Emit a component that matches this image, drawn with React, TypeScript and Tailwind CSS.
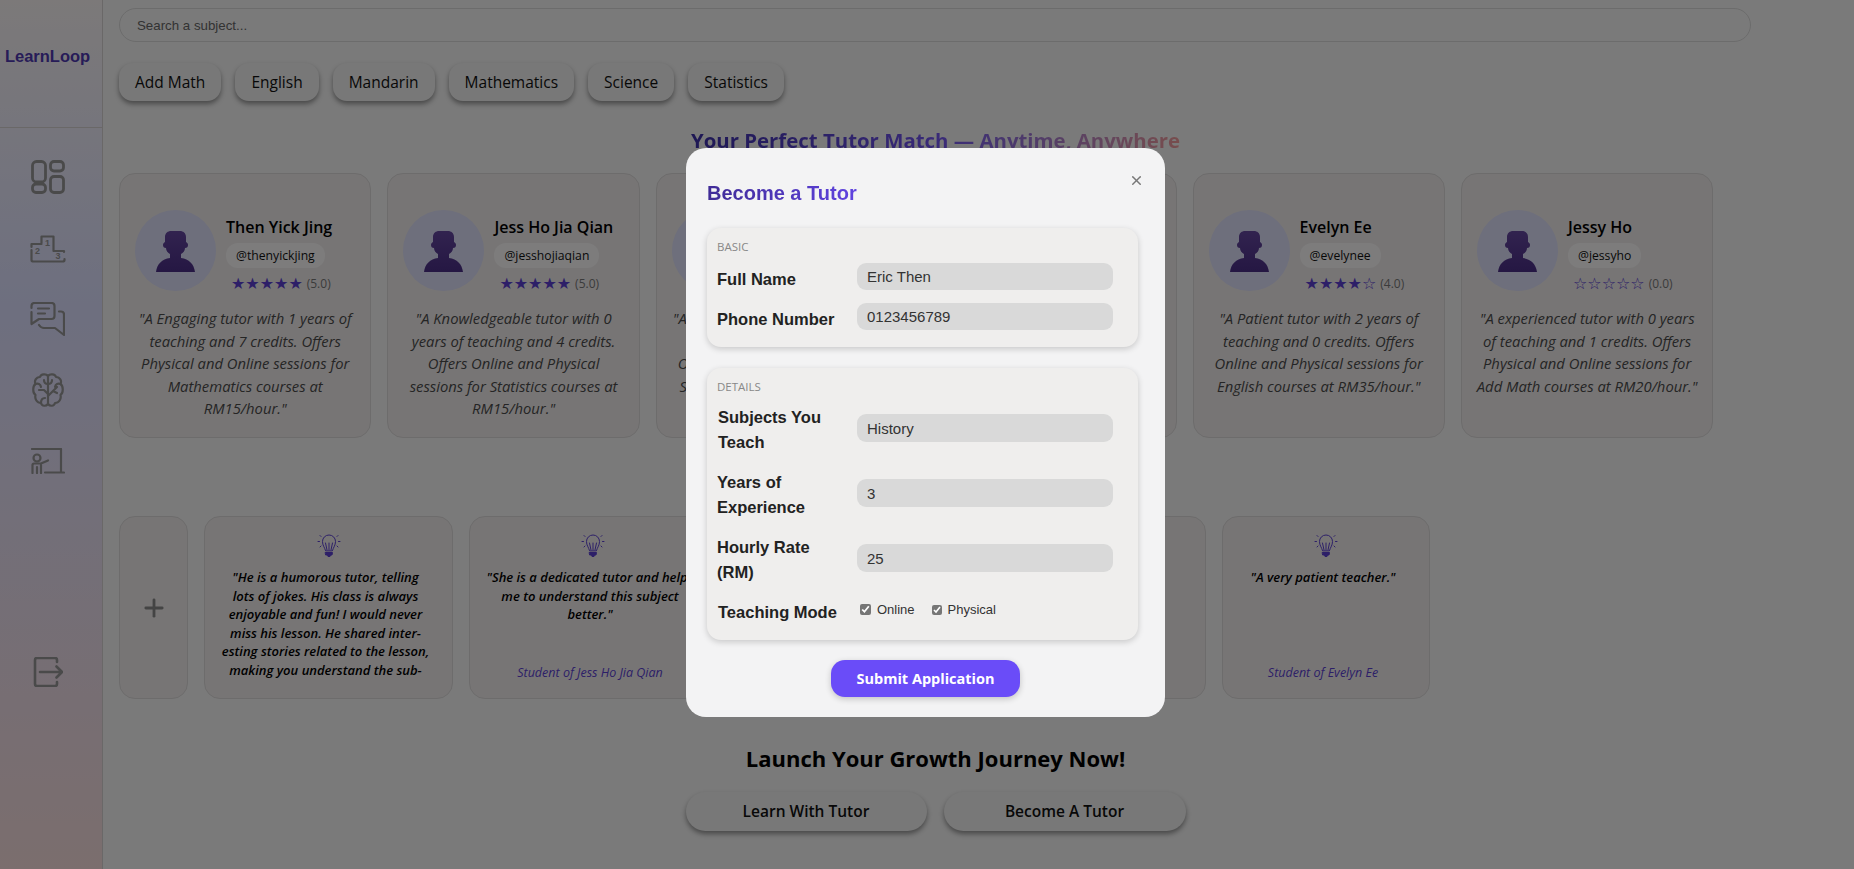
import { Plus, X } from "lucide-react";

const tutors = [
  { name: "Then Yick Jing", handle: "@thenyickjing", stars: "★★★★★", score: "(5.0)", text: '"A Engaging tutor with 1 years of teaching and 7 credits. Offers Physical and Online sessions for Mathematics courses at RM15/hour."' },
  { name: "Jess Ho Jia Qian", handle: "@jesshojiaqian", stars: "★★★★★", score: "(5.0)", text: '"A Knowledgeable tutor with 0 years of teaching and 4 credits. Offers Online and Physical sessions for Statistics courses at RM15/hour."' },
  { name: "Aisyah Rahman", handle: "@aisyahrahman", stars: "★★★★☆", score: "(4.0)", text: '"A Dedicated tutor with 3 years of teaching and 2 credits. Offers Online and Physical sessions for Science courses at RM25/hour."' },
  { name: "Wong Mei Ling", handle: "@wongmeiling", stars: "★★★★☆", score: "(4.0)", text: '"A Friendly tutor with 1 years of teaching and 3 credits. Offers Online and Physical sessions for Mandarin courses at RM20/hour."' },
  { name: "Evelyn Ee", handle: "@evelynee", stars: "★★★★☆", score: "(4.0)", text: '"A Patient tutor with 2 years of teaching and 0 credits. Offers Online and Physical sessions for English courses at RM35/hour."' },
  { name: "Jessy Ho", handle: "@jessyho", stars: "☆☆☆☆☆", score: "(0.0)", text: '"A experienced tutor with 0 years of teaching and 1 credits. Offers Physical and Online sessions for Add Math courses at RM20/hour."' },
];

const subjects = ["Add Math", "English", "Mandarin", "Mathematics", "Science", "Statistics"];

function DashboardIcon() {
  return (
    <svg width="34" height="34" viewBox="0 0 34 34" fill="none" stroke="#949494" strokeWidth="2.800">
      <rect x="1.500" y="1.500" width="13" height="20.500" rx="4" />
      <rect x="19.500" y="1.500" width="13" height="9.500" rx="3.500" />
      <rect x="1.500" y="24" width="13" height="8.500" rx="3.500" />
      <rect x="19.500" y="16.500" width="13" height="16" rx="3.500" />
    </svg>
  );
}

function PodiumIcon() {
  return (
    <svg width="36" height="28" viewBox="0 0 36 28" fill="none" stroke="#949494" strokeWidth="2.200" strokeLinecap="round" strokeLinejoin="round">
      <path d="M11.500 8V1.500h12V16h10.500v1M1.500 12V9h10M1.500 15v10q0 1.500 2 1.500h29q2 0 2-1.500v-1" />
      <text x="15" y="11" fontSize="9" fontWeight="700" fontFamily="Liberation Sans, sans-serif" fill="#949494" stroke="none">1</text>
      <text x="5" y="19" fontSize="9" fontWeight="700" fontFamily="Liberation Sans, sans-serif" fill="#949494" stroke="none">2</text>
      <text x="25.500" y="24" fontSize="9" fontWeight="700" fontFamily="Liberation Sans, sans-serif" fill="#949494" stroke="none">3</text>
    </svg>
  );
}

function ChatIcon() {
  return (
    <svg width="35" height="34" viewBox="0 0 35 34" fill="none" stroke="#949494" strokeWidth="2.200" strokeLinecap="round" strokeLinejoin="round">
      <path d="M1.500 6V4q0-3 3-3h17q3 0 3 3v10q0 3-3 3H9l-7.500 5V10" />
      <path d="M8 6.500h11M8 11.500h7" />
      <path d="M29 9.500h2q3 0 3 3V33l-9-7H14q-3 0-5-3" />
    </svg>
  );
}

function BrainIcon() {
  return (
    <svg width="32" height="34" viewBox="0 0 32 34" fill="none" stroke="#949494" strokeWidth="2.200" strokeLinecap="round" strokeLinejoin="round">
      <path d="M16 3C14 .5 9 1 8 4 4 4 2 8 3.500 11 .5 13 .5 20 3.500 22 2.500 26 5 30 9 30c1 3.500 5 3.500 7 1 2 2.500 6 2.500 7-1 4 0 6.500-4 5.500-8 3-2 3-9 0-11C30 8 28 4 24 4 23 1 18 .5 16 3z" />
      <path d="M16 3v28" />
      <path d="M16 11c-3 0-4-2-4-4M3.500 11c2.500-1 5 0 5.500 3M16 21l-4-4H7M9 30c0-3 1-5 4-5" />
      <path d="M16 11c3 0 4-2 4-4M28.500 11c-2.500-1-5 0-5.500 3M16 23l5-5 4 2M25 14l-4 4" />
    </svg>
  );
}

function TeacherIcon() {
  return (
    <svg width="34" height="26" viewBox="0 0 34 26" fill="none" stroke="#949494" strokeWidth="2.200" strokeLinecap="round" strokeLinejoin="round">
      <path d="M1 1h29v23M14 24.500h19" />
      <circle cx="6" cy="10" r="3.500" />
      <path d="M1.500 25v-8q0-1.500 1.500-1.500h7l7-3M6 25v-6M10 25v-8" />
    </svg>
  );
}

function LogoutIcon() {
  return (
    <svg width="30" height="30" viewBox="0 0 30 30" fill="none" stroke="#949494" strokeWidth="2.600" strokeLinecap="round" strokeLinejoin="round">
      <path d="M24 5V3q0-2-2-2H4Q2 1 2 3v24q0 2 2 2h18q2 0 2-2v-2" />
      <path d="M7 15h22M23.500 9.500L29 15l-5.500 5.500" />
    </svg>
  );
}

function BulbIcon() {
  return (
    <svg width="24" height="26" viewBox="0 0 24 26" fill="none" stroke="#5a3fd0" strokeWidth="1" strokeLinecap="round">
      <path d="M8.500 17.500C7.500 14 5.500 12.500 5.500 8.500a6.500 6.500 0 0 1 13 0c0 4-2 5.500-3 9z" />
      <path d="M10 17l-1.500-7M14 17l1.500-7M12 17v-7" />
      <path d="M8.500 19.500h7l-.5 2.500h-1.500l-.5 1.500h-2l-.5-1.500H9z" fill="#5a3fd0" />
      <path d="M1 8.500h1.500M21.500 8.500H23M3 2.500l1 1M21 2.500l-1 1M3 14l1-1M21 14l-1-1" />
    </svg>
  );
}

function Avatar() {
  return (
    <div className="flex h-[81px] w-[81px] shrink-0 items-end justify-center rounded-full bg-[#dcdef8] pb-[19px]">
      <svg width="39" height="41" viewBox="0 0 39 41">
        <defs>
          <linearGradient id="person" x1="0" y1="0" x2="0" y2="1">
            <stop offset="0" stopColor="#64469f" />
            <stop offset="1" stopColor="#4a2e86" />
          </linearGradient>
        </defs>
        <path
          fill="url(#person)"
          d="M0 41c1-8 6-13 14-14v-4c-2-1-4-3-4-6-2 0-3-1-3-3s1-2 2-3V6c0-4 3-6 6-6h9c3 0 6 2 6 6v5c1 1 2 1 2 3s-1 3-3 3c0 3-2 5-4 6v4c8 1 13 6 14 14z"
        />
      </svg>
    </div>
  );
}

function TutorCard({ tutor }: { tutor: (typeof tutors)[number] }) {
  return (
    <div className="flex h-[265px] w-[252.4px] shrink-0 flex-col rounded-2xl border border-[#dad8d8] bg-[#efebeb] px-[15px] pt-[36px]">
      <div className="flex gap-[10px]">
        <Avatar />
        <div className="flex flex-col items-start pt-[6px]">
          <div className="text-[16px] font-semibold leading-[22px] text-black">{tutor.name}</div>
          <div className="mt-[5px] rounded-xl bg-white/70 px-[10px] text-[12.200px] leading-[25px] text-[#111]">{tutor.handle}</div>
          <div className="mt-[6px] flex items-center gap-[4px] pl-[5px]">
            <span className="font-['DejaVu_Sans',sans-serif] text-[16px] leading-[20px] text-[#5a3fd0]">{tutor.stars}</span>
            <span className="text-[12px] leading-[20px] text-[#777]">{tutor.score}</span>
          </div>
        </div>
      </div>
      <p className="-mx-[2.500px] mt-[13px] text-center text-[14.800px] italic leading-[22.500px] text-[#4a4a4a]">{tutor.text}</p>
    </div>
  );
}

function ReviewCard({ width, text, author }: { width: string; text: React.ReactNode; author: string }) {
  return (
    <div className={`flex h-[183px] shrink-0 flex-col items-center rounded-2xl border border-[#dad8d8] bg-[#efebeb] pt-[16px] ${width}`}>
      <BulbIcon />
      <p className="mt-[9px] h-[112px] w-full overflow-hidden pl-[8px] pr-[14px] text-center text-[13px] font-semibold italic leading-[18.600px] text-black">
        {text}
      </p>
      {author ? <div className="-mt-[16px] pr-[6px] text-[12.500px] italic leading-[18px] text-[#5a3fd0]">{author}</div> : null}
    </div>
  );
}

function Field({ label, value, wide = false, inset = false, rows = 1 }: { label: string; value: string; wide?: boolean; inset?: boolean; rows?: number }) {
  return (
    <div className={`flex ${rows === 2 ? "items-center" : "items-start"}`}>
      <label className={`w-[140px] shrink-0 pr-[8px] text-[16.500px] font-bold leading-[25px] text-[#222] font-['Liberation_Sans',sans-serif] ${rows === 1 ? "mt-[4px]" : ""} ${inset ? "pl-px" : ""}`}>
        {label}
      </label>
      <input
        readOnly
        value={value}
        className={`w-[256px] rounded-[9px] bg-[#d9d9d9] px-[10px] text-[15px] text-[#333] outline-none font-['Liberation_Sans',sans-serif] ${wide ? "-mt-[3px] h-[28px]" : "h-[27px]"}`}
      />
    </div>
  );
}

function Modal() {
  return (
    <div className="fixed inset-0 flex items-center justify-center bg-black/50 pb-[4px] pr-[3px]">
      <div className="relative flex h-[569px] w-[479px] flex-col rounded-[20px] bg-[#f3f3f4] pl-[21px] pr-[27px] pt-[32px]">
        <button className="absolute right-[21px] top-[25px] text-[#777]">
          <X size={15} strokeWidth={2.400} />
        </button>
        <h2 className="h-[26px] w-fit bg-gradient-to-r from-[#3f2b96] to-[#5f43e0] bg-clip-text text-[20px] font-bold leading-[26px] text-transparent font-['Liberation_Sans',sans-serif]">
          Become a Tutor
        </h2>
        <section className="mt-[22px] h-[119px] rounded-[14px] bg-[#efeeed] px-[10px] pt-[11px] shadow-[0_2px_6px_rgba(0,0,0,0.18)]">
          <div className="text-[11.500px] leading-[16px] text-[#888]">BASIC</div>
          <div className="mt-[8px] flex flex-col gap-[11px]">
            <Field label="Full Name" value="Eric Then" />
            <Field label="Phone Number" value="0123456789" />
          </div>
        </section>
        <section className="mt-[21px] h-[272px] rounded-[14px] bg-[#efeeed] px-[10px] pt-[11px] shadow-[0_2px_6px_rgba(0,0,0,0.18)]">
          <div className="text-[11.500px] leading-[16px] text-[#888]">DETAILS</div>
          <div className="mt-[9.500px] flex flex-col gap-[15px]">
            <Field label="Subjects You Teach" value="History" wide inset rows={2} />
            <Field label="Years of Experience" value="3" wide rows={2} />
            <Field label="Hourly Rate (RM)" value="25" wide rows={2} />
            <div className="flex items-center">
              <label className="w-[140px] shrink-0 pl-px text-[16.500px] font-bold leading-[25px] text-[#222] font-['Liberation_Sans',sans-serif]">
                Teaching Mode
              </label>
              <div className="-mt-[5px] ml-[3px] flex items-center font-['Liberation_Sans',sans-serif] text-[13px] text-[#333]">
                <input type="checkbox" readOnly checked className="m-0 h-[11px] w-[11px] accent-[#767676]" />
                <span className="ml-[6px]">Online</span>
                <input type="checkbox" readOnly checked className="m-0 ml-[17px] h-[10px] w-[10px] accent-[#767676]" />
                <span className="ml-[6px]">Physical</span>
              </div>
            </div>
          </div>
        </section>
        <button className="ml-[124px] mt-[20px] h-[37px] w-[189px] rounded-[14px] bg-[#6a4cf8] text-[14.500px] font-bold text-white shadow-[0_2px_6px_rgba(0,0,0,0.2)]">
          Submit Application
        </button>
      </div>
    </div>
  );
}

export default function App() {
  return (
    <div className="flex h-[869px] w-full overflow-hidden bg-[#f4f4f4] font-['Open_Sans',sans-serif]">
      <aside className="flex h-full w-[103px] shrink-0 flex-col border-r border-[#d4d0d0] bg-gradient-to-b from-[#f8f3f3] via-[#dcdfff] via-35% to-[#f6dcdc]">
        <div className="h-[128px] border-b border-[#d4d0d0] pr-[7px] pt-[46px] text-center text-[16.500px] font-bold leading-[20px] text-[#4f38b0] font-['Liberation_Sans',sans-serif]">
          LearnLoop
        </div>
        <nav className="flex flex-col items-center pr-[7px] pt-[32px]">
          <DashboardIcon />
          <div className="mt-[41px]"><PodiumIcon /></div>
          <div className="mt-[39px]"><ChatIcon /></div>
          <div className="mt-[37px]"><BrainIcon /></div>
          <div className="mt-[41px]"><TeacherIcon /></div>
          <div className="mt-[183px]"><LogoutIcon /></div>
        </nav>
      </aside>
      <main className="min-w-0 flex-1 pl-[16px] pt-[8px]">
        <input
          readOnly
          placeholder="Search a subject..."
          className="h-[34px] w-[1632px] rounded-full border border-[#d8d8d8] bg-white/10 px-[17px] text-[13.300px] font-medium outline-none placeholder:text-[#666] font-['Liberation_Sans',sans-serif]"
        />
        <div className="mt-[21px] flex gap-[14px]">
          {subjects.map((s) => (
            <button key={s} className="h-[38px] rounded-[14px] bg-[#f0f0f0] px-[16px] pt-px text-[15.500px] text-[#111] shadow-[0_3px_5px_rgba(0,0,0,0.4)]">
              {s}
            </button>
          ))}
        </div>
        <h1 className="mt-[24px] w-[1633px] text-center text-[20.400px] font-bold leading-[30px]">
          <span className="bg-gradient-to-r from-[#3c2fa8] via-[#7254f0] to-[#f09a9a] bg-clip-text text-transparent">
            Your Perfect Tutor Match — Anytime, Anywhere
          </span>
        </h1>
        <div className="mt-[18px] flex gap-[16px]">
          {tutors.map((t) => (
            <TutorCard key={t.handle} tutor={t} />
          ))}
        </div>
        <div className="mt-[78px] flex gap-[16px]">
          <div className="flex h-[183px] w-[69px] shrink-0 items-center justify-center rounded-2xl border border-[#dad8d8] bg-[#efebeb]">
            <Plus size={28} strokeWidth={2.400} color="#888" />
          </div>
          <ReviewCard
            width="w-[249px]"
            author=""
            text={<>"He is a humorous tutor, telling<br />lots of jokes. His class is always<br />enjoyable and fun! I would never<br />miss his lesson. He shared inter-<br />esting stories related to the lesson,<br />making you understand the sub-</>}
          />
          <ReviewCard
            width="w-[248px]"
            author="Student of Jess Ho Jia Qian"
            text={<>"She is a dedicated tutor and helps<br />me to understand this subject<br />better."</>}
          />
          <ReviewCard width="w-[228px]" author="" text="" />
          <ReviewCard width="w-[229px]" author="" text="" />
          <ReviewCard width="w-[208px]" author="Student of Evelyn Ee" text={<>"A very patient teacher."</>} />
        </div>
        <h2 className="mt-[44px] w-[1633px] text-center text-[22px] font-bold leading-[30px] text-black">
          Launch Your Growth Journey Now!
        </h2>
        <div className="mt-[19px] flex w-[1633px] justify-center gap-[17px]">
          <button className="h-[39px] w-[241px] rounded-full bg-[#f0f0f0] text-[15.500px] font-semibold text-[#111] shadow-[0_3px_5px_rgba(0,0,0,0.4)]">
            Learn With Tutor
          </button>
          <button className="h-[39px] w-[242px] rounded-full bg-[#f0f0f0] text-[15.500px] font-semibold text-[#111] shadow-[0_3px_5px_rgba(0,0,0,0.4)]">
            Become A Tutor
          </button>
        </div>
      </main>
      <Modal />
    </div>
  );
}
